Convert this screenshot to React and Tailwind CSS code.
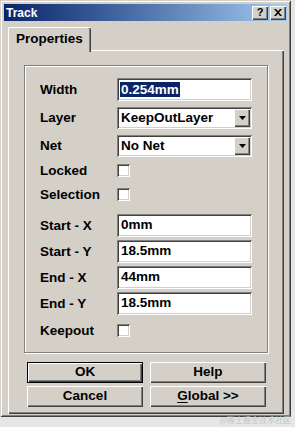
const raised = "shadow-[inset_1px_1px_0_#fff,inset_-1px_-1px_0_#404040,inset_-2px_-2px_0_#808080]";
const sunken = "shadow-[inset_1px_1px_0_#808080,inset_-1px_-1px_0_#fff,inset_2px_2px_0_#404040,inset_-2px_-2px_0_#d4d0c8]";

function Row({ label, className, children }) {
  return (
    <div className={"flex items-center " + className}>
      <div className="w-[77px] text-[13.5px] font-bold leading-none">{label}</div>
      {children}
    </div>
  );
}

function Field({ children }) {
  return (
    <div className={"flex h-full w-[135px] items-center bg-white pl-[4px] text-[13.5px] font-bold " + sunken}>
      {children}
    </div>
  );
}

function Select({ value }) {
  return (
    <div className={"flex h-full w-[135px] items-center bg-white pl-[4px] pr-[2px] text-[13.5px] font-bold " + sunken}>
      <span className="flex-1">{value}</span>
      <div className={"flex h-[18px] w-[16px] items-center justify-center bg-[#d4d0c8] " + raised}>
        <svg width="7" height="4" viewBox="0 0 7 4">
          <path d="M0 0h7L3.5 4z" fill="#000" />
        </svg>
      </div>
    </div>
  );
}

function Check() {
  return <div className={"h-[13px] w-[13px] bg-white " + sunken} />;
}

function Button({ children, isDefault }) {
  if (isDefault) {
    return (
      <div className="h-[21px] w-[116px] border border-black">
        <div className={"flex h-full w-full items-center justify-center bg-[#d4d0c8] text-[13.5px] font-bold " + raised}>
          {children}
        </div>
      </div>
    );
  }
  return (
    <div className={"flex h-[21px] w-[116px] items-center justify-center bg-[#d4d0c8] text-[13.5px] font-bold " + raised}>
      {children}
    </div>
  );
}

export default function App() {
  return (
    <div className="relative h-[427px] w-[295px] overflow-hidden bg-[#e6e6e6] font-['Liberation_Sans',Arial,sans-serif] text-black">
      <div className="h-[417px] w-[291px] bg-[#d4d0c8] p-[4px] shadow-[inset_1px_1px_0_#d4d0c8,inset_-1px_-1px_0_#404040,inset_2px_2px_0_#fff,inset_-2px_-2px_0_#808080]">
        {/* Title bar */}
        <div className="flex h-[17px] items-center bg-gradient-to-r from-[#0a246a] to-[#a6caf0] pl-[2px] pr-[1px]">
          <span className="flex-1 text-[12px] font-bold text-white">Track</span>
          <div className={"flex h-[14px] w-[16px] items-center justify-center bg-[#d4d0c8] text-[11px] font-bold " + raised}>?</div>
          <div className={"ml-[2px] flex h-[14px] w-[16px] items-center justify-center bg-[#d4d0c8] " + raised}>
            <svg width="8" height="7" viewBox="0 0 8 7">
              <path d="M0 0h2l2 2.2L6 0h2L5 3.5 8 7H6L4 4.8 2 7H0l3-3.5z" fill="#000" />
            </svg>
          </div>
        </div>

        {/* Tabs */}
        <div className="ml-[4px] mr-[3px] mt-[6px]">
          <div className="relative z-10 -mb-[2px] flex h-[25px] w-[83px] items-center rounded-t-[2px] border-l border-t border-white bg-[#d4d0c8] pl-[7px] text-[13.5px] font-bold shadow-[inset_-1px_0_0_#404040,inset_-2px_0_0_#808080]">
            <span className="-mt-[2px]">Properties</span>
          </div>
          <div className={"h-[364px] bg-[#d4d0c8] px-[16px] pt-[15px] " + raised}>
            {/* Group box */}
            <div className="flex h-[288px] flex-col border border-[#808080] pl-[15px] shadow-[1px_1px_0_#fff,inset_1px_1px_0_#fff]">
              <Row label="Width" className="mt-[12px] h-[23px]">
                <Field>
                  <span className="-ml-[1px] bg-[#0a246a] px-[1px] leading-[15px] text-white">0.254mm</span>
                </Field>
              </Row>
              <Row label="Layer" className="mt-[6px] h-[22px]">
                <Select value="KeepOutLayer" />
              </Row>
              <Row label="Net" className="mt-[6px] h-[22px]">
                <Select value="No Net" />
              </Row>
              <Row label="Locked" className="mt-[5px] h-[17px]">
                <Check />
              </Row>
              <Row label="Selection" className="mt-[7px] h-[17px]">
                <Check />
              </Row>
              <Row label="Start - X" className="mt-[11px] h-[23px]">
                <Field>0mm</Field>
              </Row>
              <Row label="Start - Y" className="mt-[3px] h-[23px]">
                <Field>18.5mm</Field>
              </Row>
              <Row label="End - X" className="mt-[3px] h-[23px]">
                <Field>44mm</Field>
              </Row>
              <Row label="End - Y" className="mt-[3px] h-[23px]">
                <Field>18.5mm</Field>
              </Row>
              <Row label="Keepout" className="mt-[7px] h-[17px]">
                <Check />
              </Row>
            </div>

            {/* Buttons */}
            <div className="ml-[3px] mt-[9px] grid w-[239px] grid-cols-2 gap-x-[7px] gap-y-[3px]">
              <Button isDefault>OK</Button>
              <Button>Help</Button>
              <Button>Cancel</Button>
              <Button>
                <span>
                  <span className="underline underline-offset-2">G</span>lobal &gt;&gt;
                </span>
              </Button>
            </div>
          </div>
        </div>
      </div>
      <div className="absolute bottom-[1px] right-[4px] text-[8px] text-[#c4c4c4] font-['Noto_Sans_CJK_SC',sans-serif]">@稀土掘金技术社区</div>
    </div>
  );
}
